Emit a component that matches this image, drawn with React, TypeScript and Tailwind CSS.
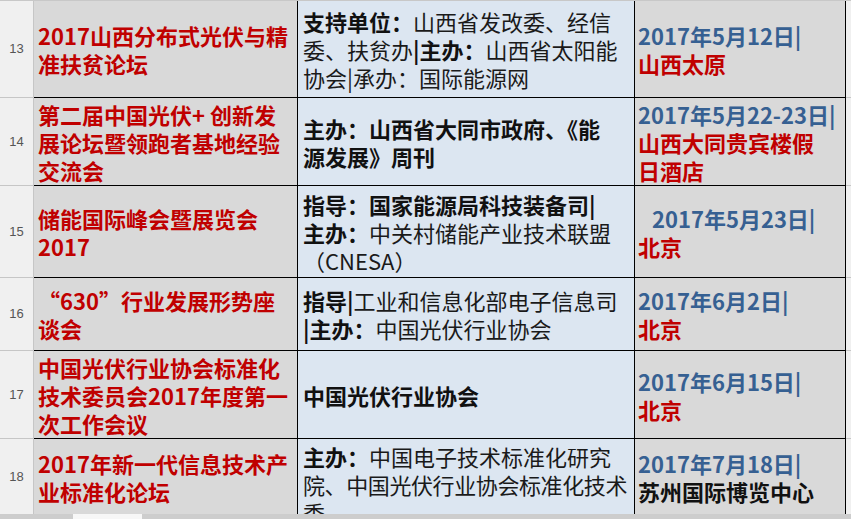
import * as React from "react"

type Row = {
  n: number
  h: string
  bb: string
  c1: React.ReactNode
  c2: React.ReactNode
  c3: React.ReactNode
  c2Align?: string
}

const B = ({ children }: { children: React.ReactNode }) => (
  <span className="font-bold text-[#111]">{children}</span>
)

const Blue = ({ children }: { children: React.ReactNode }) => (
  <span className="text-[#366092]">{children}</span>
)

const Red = ({ children }: { children: React.ReactNode }) => (
  <span className="text-[#c00000]">{children}</span>
)

const ROWS: Row[] = [
  {
    n: 13,
    h: "h-[97px]",
    bb: "border-b",
    c1: (
      <>
        2017山西分布式光伏与精
        <br />
        准扶贫论坛
      </>
    ),
    c2: (
      <>
        <B>支持单位：</B>山西省发改委、经信
        <br />
        委、扶贫办<B>|主办：</B>山西省太阳能
        <br />
        协会|承办：国际能源网
      </>
    ),
    c3: (
      <>
        <Blue>2017年5月12日|</Blue>
        <br />
        <Red>山西太原</Red>
      </>
    ),
  },
  {
    n: 14,
    h: "h-[88px]",
    bb: "border-b",
    c1: (
      <>
        第二届中国光伏+ 创新发
        <br />
        展论坛暨领跑者基地经验
        <br />
        交流会
      </>
    ),
    c2: (
      <B>
        主办：山西省大同市政府、《能
        <br />
        源发展》周刊
      </B>
    ),
    c3: (
      <>
        <Blue>2017年5月22-23日|</Blue>
        <br />
        <Red>
          山西大同贵宾楼假
          <br />
          日酒店
        </Red>
      </>
    ),
  },
  {
    n: 15,
    h: "h-[92px]",
    bb: "border-b",
    c1: (
      <>
        储能国际峰会暨展览会
        <br />
        2017
      </>
    ),
    c2: (
      <>
        <B>指导：国家能源局科技装备司|</B>
        <br />
        <B>主办：</B>中关村储能产业技术联盟
        <br />
        （CNESA）
      </>
    ),
    c3: (
      <>
        <span className="ml-[14px]">
          <Blue>2017年5月23日|</Blue>
        </span>
        <br />
        <Red>北京</Red>
      </>
    ),
  },
  {
    n: 16,
    h: "h-[73px]",
    bb: "border-b",
    c1: (
      <>
        “630”行业发展形势座
        <br />
        谈会
      </>
    ),
    c2: (
      <>
        <B>指导|</B>工业和信息化部电子信息司
        <br />
        <B>|主办：</B>中国光伏行业协会
      </>
    ),
    c3: (
      <>
        <Blue>2017年6月2日|</Blue>
        <br />
        <Red>北京</Red>
      </>
    ),
  },
  {
    n: 17,
    h: "h-[88px]",
    bb: "border-b",
    c1: (
      <>
        中国光伏行业协会标准化
        <br />
        技术委员会2017年度第一
        <br />
        次工作会议
      </>
    ),
    c2: <B>中国光伏行业协会</B>,
    c3: (
      <>
        <Blue>2017年6月15日|</Blue>
        <br />
        <Red>北京</Red>
      </>
    ),
  },
  {
    n: 18,
    h: "h-[75px]",
    bb: "border-b-0",
    c1: (
      <>
        2017年新一代信息技术产
        <br />
        业标准化论坛
      </>
    ),
    c2: (
      <>
        <B>主办：</B>中国电子技术标准化研究
        <br />
        <span className="tracking-[-0.4px]">院、中国光伏行业协会标准化技术</span>
        <br />
        委
      </>
    ),
    c2Align: "items-start pt-[3px]",
    c3: (
      <>
        <Blue>2017年7月18日|</Blue>
        <br />
        <span className="text-[#111]">苏州国际博览中心</span>
      </>
    ),
  },
]

export default function App() {
  return (
    <div className="w-[851px] h-[519px] overflow-hidden bg-[#f0f0f0] font-['Noto_Sans_CJK_SC',sans-serif] text-[22px] leading-[28px] whitespace-nowrap">
      <div className="h-px bg-[#c8c8c8]" />

      {ROWS.map((r) => (
        <div
          key={r.n}
          className={`grid grid-cols-[34px_264px_337px_211px_5px] ${r.h}`}
        >
          {/* row number */}
          <div
            className={`flex items-center justify-center bg-[#f0f0f0] border-r border-[#a6a6a6] border-[#c6c6c6] ${r.bb} font-['Liberation_Sans',sans-serif] text-[13px] text-[#555]`}
          >
            {r.n}
          </div>

          <div
            className={`flex items-center overflow-hidden bg-[#d9d9d9] border-r border-black ${r.bb} pl-[4px] font-bold text-[#c00000]`}
          >
            <div>{r.c1}</div>
          </div>

          <div
            className={`flex ${r.c2Align ?? "items-center"} overflow-hidden bg-[#dce6f1] border-r border-black ${r.bb} pl-[5px] text-[#1a1a1a]`}
          >
            <div>{r.c2}</div>
          </div>

          <div
            className={`flex items-center overflow-hidden bg-[#d9d9d9] border-r border-black ${r.bb} pl-[3px] font-bold`}
          >
            <div>{r.c3}</div>
          </div>

          <div className={`bg-[#f0f0f0] border-[#c6c6c6] ${r.bb}`} />
        </div>
      ))}

      {/* scrollbar edge */}
      <div className="flex h-[5px] bg-[#cdcdcd]">
        <div className="w-[73px]" />
        <div className="w-[69px] bg-[#f7f7f7]" />
      </div>
    </div>
  )
}
